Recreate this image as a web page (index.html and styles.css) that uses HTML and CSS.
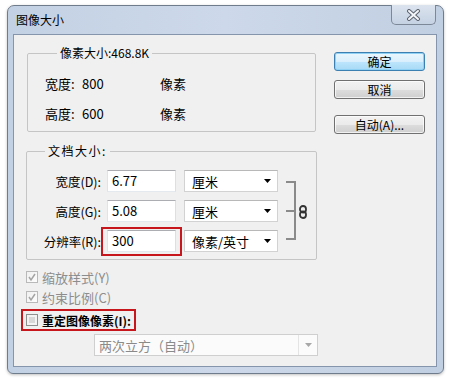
FILE: index.html
```
<!DOCTYPE html>
<html lang="zh-CN">
  <head>
    <meta charset="UTF-8" />
    <link rel="stylesheet" href="styles.css">
    <title>图像大小</title>
  </head>
  <body>
    <div class="window">
      <div class="titlebar">
        <span class="title">图像大小</span>
        <span class="close">
          <svg width="17" height="12" viewBox="0 0 17 12">
            <path d="M4 2 L13 10 M13 2 L4 10" stroke="#5d6570" stroke-width="4" stroke-linecap="round" />
            <path d="M4 2 L13 10 M13 2 L4 10" stroke="#f4f6f9" stroke-width="2" stroke-linecap="round" />
          </svg>
        </span>
      </div>
      <div class="client">
        <div class="left">
          <fieldset class="group pixels">
            <legend>像素大小:468.8K</legend>
            <div class="prow"><span class="plabel">宽度:</span><span class="pval">800</span><span>像素</span></div>
            <div class="prow"><span class="plabel">高度:</span><span class="pval">600</span><span>像素</span></div>
          </fieldset>

          <fieldset class="group doc">
            <legend class="spaced">文档大小:</legend>
            <div class="docgrid">
              <label class="dlabel">宽度(D):</label>
              <div class="field">6.77</div>
              <div class="combo"><span>厘米</span><svg class="arrow" width="7" height="4" viewBox="0 0 7 4"><path d="M0 0 H7 L3.5 4 Z" fill="#000" /></svg></div>

              <label class="dlabel">高度(G):</label>
              <div class="field">5.08</div>
              <div class="combo"><span>厘米</span><svg class="arrow" width="7" height="4" viewBox="0 0 7 4"><path d="M0 0 H7 L3.5 4 Z" fill="#000" /></svg></div>

              <label class="dlabel">分辨率(R):</label>
              <div class="mark-field"><div class="field">300</div></div>
              <div class="combo"><span>像素/英寸</span><svg class="arrow" width="7" height="4" viewBox="0 0 7 4"><path d="M0 0 H7 L3.5 4 Z" fill="#000" /></svg></div>

              <div class="bracket"><span class="tick"></span></div>
              <div class="chain">
                <svg width="8" height="14" viewBox="0 0 8 14">
                  <rect x="1" y="1" width="6" height="6.5" rx="3" fill="none" stroke="#333" stroke-width="1.8" />
                  <rect x="1" y="6.5" width="6" height="6.5" rx="3" fill="none" stroke="#333" stroke-width="1.8" />
                </svg>
              </div>
            </div>
          </fieldset>

          <div class="check disabled first">
            <span class="box"><svg width="10" height="10" viewBox="0 0 10 10"><path d="M2 5 L4 8 L8 2" fill="none" stroke="#a4a4a4" stroke-width="1.5" /></svg></span>
            <span>缩放样式(Y)</span>
          </div>
          <div class="check disabled">
            <span class="box"><svg width="10" height="10" viewBox="0 0 10 10"><path d="M2 5 L4 8 L8 2" fill="none" stroke="#a4a4a4" stroke-width="1.5" /></svg></span>
            <span>约束比例(C)</span>
          </div>
          <div class="check mark-check">
            <span class="box empty"></span>
            <span class="strong">重定图像像素(I):</span>
          </div>
          <div class="combo wide off">
            <span>两次立方（自动）</span>
            <span class="drop"><svg width="7" height="4" viewBox="0 0 7 4"><path d="M0 0 H7 L3.5 4 Z" fill="#a8a8a8" /></svg></span>
          </div>
        </div>

        <div class="buttons">
          <button class="btn default">确定</button>
          <button class="btn">取消</button>
          <button class="btn auto">自动(A)...</button>
        </div>
      </div>
    </div>
  </body>
</html>
```
FILE: styles.css
```
* {
  box-sizing: border-box;
  margin: 0;
  padding: 0;
}

body {
  width: 451px;
  height: 380px;
  background: #fff;
  font-family: "Noto Sans CJK SC", "Noto Sans", sans-serif;
  font-size: 12px;
  color: #000;
  overflow: hidden;
}

.window {
  width: 437px;
  height: 369px;
  margin: 5px 0 0 7px;
  padding: 0 6px 6px 5px;
  border: 1px solid #6f7c8c;
  border-radius: 7px 7px 6px 6px;
  background: linear-gradient(90deg, #c3d1e4, #cdd9ea 50%, #c1cfe2);
  box-shadow: 0 1px 3px rgba(0, 0, 0, 0.25);
}

.titlebar {
  display: flex;
  height: 28px;
}

.title {
  margin-left: 3px;
  line-height: 28px;
  font-size: 12px;
}

.close {
  display: flex;
  align-items: center;
  justify-content: center;
  width: 45px;
  height: 20px;
  margin: -1px 1px 0 auto;
  border: 1px solid #7c8897;
  border-top: none;
  border-radius: 0 0 5px 5px;
  background: linear-gradient(#dbe3ee, #c5d2e3);
}

.client {
  display: flex;
  height: 333px;
  padding-left: 12px;
  border: 1px solid #8595ab;
  background: #f0f0f0;
}

.left {
  display: flex;
  flex-direction: column;
  width: 291px;
}

.group {
  border: 1px solid #c5c5c5;
  border-radius: 2px;
  padding: 0;
  min-width: 0;
}

.group legend {
  line-height: 16px;
  padding: 0 3px;
  font-size: 12px;
}

.pixels {
  width: 289px;
  margin: 10px 0 0 1px;
  padding: 7px 0 3px 17px;
}

.pixels legend {
  margin-left: 12px;
}

.prow {
  display: flex;
  align-items: center;
  height: 30px;
  font-size: 13px;
}

.plabel {
  width: 37px;
}

.pval {
  width: 78px;
}

.doc {
  width: 291px;
  margin-top: 11px;
  padding: 7px 0 3px 0;
}

.doc legend {
  margin-left: 18px;
}

.spaced {
  letter-spacing: 1.5px;
}

.docgrid {
  display: grid;
  grid-template-columns: 75px 74px 102px 18px 20px;
  grid-template-rows: repeat(3, 30px);
  align-items: center;
}

.dlabel {
  text-align: right;
  font-size: 12.5px;
  padding-right: 1px;
}

.field {
  height: 22px;
  margin-left: 5px;
  width: 69px;
  padding-left: 4px;
  line-height: 20px;
  font-size: 13px;
  background: #fff;
  border: 1px solid;
  border-color: #abadb3 #dbdfe6 #e3e9ef #e2e3ea;
}

.mark-field {
  width: 81px;
  margin: -3px 0 -4px -1px;
  padding: 1px 0 2px 0;
  border: 2px solid #c8161d;
}

.mark-field .field {
  margin-left: 4px;
}

.combo {
  display: flex;
  align-items: center;
  justify-content: space-between;
  height: 22px;
  margin-left: 8px;
  width: 94px;
  padding: 0 6px 0 7px;
  background: #fff;
  border: 1px solid #d2d2d2;
  border-top-color: #b8b8b8;
  font-size: 13px;
  white-space: nowrap;
}

.bracket {
  grid-column: 4;
  grid-row: 1 / 4;
  align-self: stretch;
  display: flex;
  align-items: center;
  width: 10px;
  margin: 15px 0 16px 8px;
  border: 2px solid #8a8a8a;
  border-left: none;
}

.tick {
  width: 8px;
  height: 2px;
  background: #8a8a8a;
}

.chain {
  grid-column: 5;
  grid-row: 1 / 4;
  display: flex;
  padding: 2px 0 0 3px;
}

.check {
  display: flex;
  align-items: center;
  gap: 4px;
  height: 20px;
  font-size: 13px;
  white-space: nowrap;
}

.check.disabled {
  color: #8d8d8d;
}

.check.first {
  margin-top: 7px;
}

.box {
  display: flex;
  align-items: center;
  justify-content: center;
  flex: none;
  width: 12px;
  height: 12px;
  border: 1px solid #b9b9b9;
  background: linear-gradient(135deg, #f0f0f0, #fdfdfd);
}

.box.empty {
  border-color: #8e8f8f;
  background: #fff;
  box-shadow: inset 0 0 0 2px #f3f3f3, inset 0 0 0 6px #d8d8d8;
}

.mark-check {
  width: 115px;
  height: 22px;
  margin: 2px 0 0 -5px;
  padding-left: 3px;
  border: 2px solid #c8161d;
}

.strong {
  font-weight: bold;
  font-size: 12px;
}

.combo.wide {
  width: 224px;
  margin: 3px 0 0 68px;
  padding: 0 0 0 4px;
  color: #8a8a8a;
  border-color: #cfcfcf;
  background: #fbfbfb;
}

.drop {
  display: flex;
  align-items: center;
  justify-content: center;
  width: 19px;
  height: 100%;
  border-left: 1px solid #e4e4e4;
}

.buttons {
  display: flex;
  flex-direction: column;
  margin-left: 17px;
  padding-top: 17px;
}

.btn {
  width: 91px;
  height: 19px;
  font-family: inherit;
  font-size: 12px;
  line-height: 15px;
  color: #000;
  border: 1px solid #707070;
  border-radius: 3px;
  background: linear-gradient(#f2f2f2 0%, #ebebeb 50%, #dddddd 51%, #cfcfcf 100%);
  box-shadow: inset 0 0 0 1px rgba(255, 255, 255, 0.7);
}

.btn.default {
  border-color: #3c7fb1;
  background: linear-gradient(#eaf6fd 0%, #d9f0fc 50%, #bee6fd 51%, #a7d9f5 100%);
  box-shadow: inset 0 0 0 1px #8fd1f4;
}

.btn + .btn {
  margin-top: 9px;
}

.btn.auto {
  margin-top: 16px;
}
```
